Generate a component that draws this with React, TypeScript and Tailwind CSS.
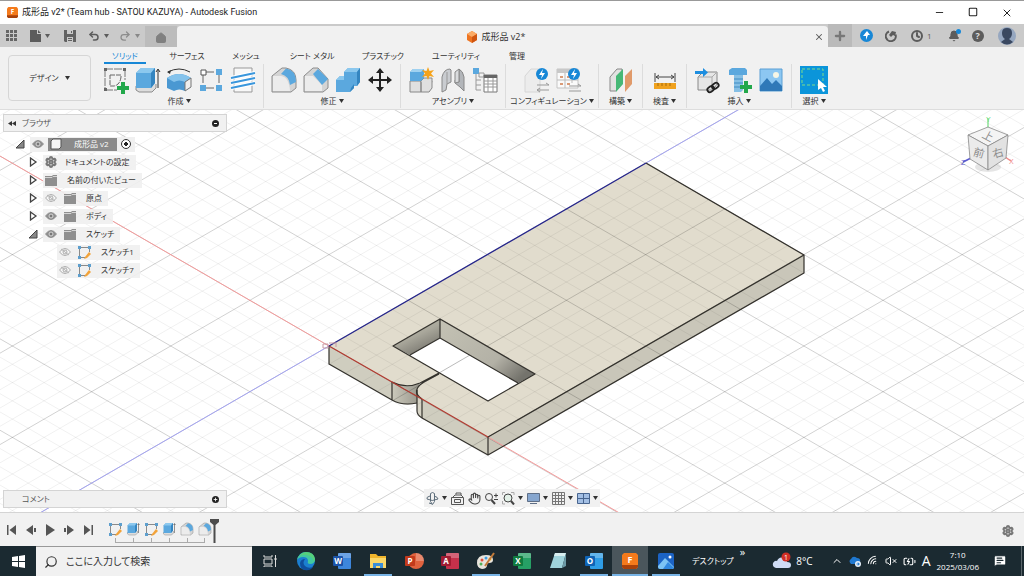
import type { ReactNode } from 'react';
import { Search, Minus, Square, X, Plus, Undo2, Redo2, House, Bell, Clock, Settings, Hand, MessageSquareText, ChevronUp, Wifi, VolumeX, BatteryCharging } from 'lucide-react';

// ---------- canvas geometry ----------
const ORIGIN = { x: 329, y: 346 };
const SLOPE = 0.5774;
const MINOR = 18.28;

const gridLines = (dir: number) =>
    Array.from({ length: 81 }, (_, i) => i - 40).map((k) => {
        const y = (x: number) => ORIGIN.y + dir * SLOPE * (x - ORIGIN.x) + k * MINOR;
        return { k, major: k % 5 === 0, y1: y(-200), y2: y(1400) };
    });

function Grid() {
    return (
        <g>
            {[1, -1].map((dir) =>
                gridLines(dir).map((l) => (
                    <line
                        key={`${dir}${l.k}`}
                        x1={-200}
                        y1={l.y1}
                        x2={1400}
                        y2={l.y2}
                        stroke="#000"
                        strokeOpacity={l.major ? 0.18 : 0.06}
                    />
                ))
            )}
        </g>
    );
}

function Model() {
    return (
        <svg className="absolute inset-0 h-full w-full" viewBox="0 110 1024 402" preserveAspectRatio="xMidYMid slice">
            <defs>
                <linearGradient id="wallL" x1="0" y1="0.2" x2="0.5" y2="1">
                    <stop offset="0" stopColor="#bcb9aa" />
                    <stop offset="0.5" stopColor="#aaa89c" />
                    <stop offset="1" stopColor="#7d7b73" />
                </linearGradient>
                <linearGradient id="wallR" x1="0" y1="0" x2="1" y2="0.7">
                    <stop offset="0" stopColor="#c4c2b4" />
                    <stop offset="0.7" stopColor="#b3b1a6" />
                    <stop offset="1" stopColor="#74736c" />
                </linearGradient>
                <linearGradient id="fillet" x1="0" y1="0" x2="1" y2="0">
                    <stop offset="0" stopColor="#cbc9bb" />
                    <stop offset="1" stopColor="#98968c" />
                </linearGradient>
            </defs>
            <rect x="-200" y="0" width="1600" height="700" fill="#fff" />
            <path d="M329 346 646 163 804 255 488 437 422 399Q411 392 420 384L439 373 420 383Q407 389 392 382Z" fill="#e1dccd" />
            <path d="M329 346 392 382V400L329 364Z" fill="#cfcdbf" />
            <path d="M392 382Q405 389 420 383L418 388V403Q404 407 392 400Z" fill="url(#fillet)" />
            <path d="M417 390Q417 396 422 399V418Q417 415 417 411Z" fill="#d6d3c5" />
            <path d="M422 399 488 437V455L422 418Z" fill="#cfcdbf" />
            <path d="M488 437 804 255V273L488 455Z" fill="#c9c6b9" />
            <Grid />
            <path d="M393 346 440 319 535 374 488 401Z" fill="#fff" />
            <path d="M439 373 470 355" stroke="#bbb" />
            <path d="M393 346 440 319V338L410 355Z" fill="url(#wallL)" />
            <path d="M440 319 535 374 518 383 440 338Z" fill="url(#wallR)" />
            <path d="M-200 40.6 329 346M488 437 1000 733" stroke="#f59a9a" />
            <path d="M329 346-200 651.5M646 163 1000-41" stroke="#a3a3f3" />
            <g fill="none" stroke="#33312c" strokeWidth="1.2" strokeLinejoin="round">
                <path d="M646 163 804 255V273L488 455 422 418Q417 415 417 411V390" />
                <path d="M804 255 488 437V455M329 346V364L392 400Q402 406 417 403M392 382V400M422 399V418" />
                <path d="M392 382Q406 389 420 383L439 373M422 399Q410 391 424 382L439 374" />
                <path d="M393 346 440 319 535 374 488 401ZM440 319V338L518 383M440 338 410 355" />
            </g>
            <path d="M329 346 392 382Q399 386 404 389L422 399 488 437" fill="none" stroke="#b23a30" strokeWidth="1.2" />
            <path d="M329 346 646 163" stroke="#25258c" strokeWidth="1.3" />
            <path d="M323 344h5v4h-5zM329 343h7v4" fill="none" stroke="#c79aa5" />
        </svg>
    );
}

function ViewCube() {
    return (
        <svg className="absolute top-1 right-1 h-16 w-16" viewBox="956 114 64 64">
            <ellipse cx="988" cy="167" rx="13" ry="5" fill="#000" opacity=".1" />
            <path d="M988 128V118" stroke="#6fdc7c" strokeWidth="1.2" />
            <path d="M971 158 963 162" stroke="#5a5ad0" strokeWidth="1.5" />
            <path d="M1005 157 1011 161" stroke="#f08a8a" strokeWidth="1.5" />
            <g stroke="#888" strokeWidth=".8" strokeLinejoin="round">
                <path d="M988 127 1008 135 988 146 968 135Z" fill="#f4f4f4" />
                <path d="M968 135 988 146V170L970 159Z" fill="#ebebeb" />
                <path d="M1008 135 988 146V170L1006 158Z" fill="#e2e2e2" />
            </g>
            <g fontSize="11" fill="#8c8c8c" textAnchor="middle" fontFamily="Noto Sans CJK JP">
                <text x="988" y="140" transform="rotate(28 988 136)">上</text>
                <text x="979" y="157" transform="rotate(16 979 153)">前</text>
                <text x="998" y="157" transform="rotate(-16 998 153)">右</text>
            </g>
            <g fontSize="7" fontFamily="Liberation Sans">
                <text x="986" y="122" fill="#6fdc7c">Y</text>
                <text x="961" y="165" fill="#5a5ad0">Z</text>
                <text x="1009" y="164" fill="#f08a8a">X</text>
            </g>
        </svg>
    );
}

// ---------- ribbon icons, all on a 28px grid ----------
const Ico = ({ children, className = 'size-7' }: { children: ReactNode; className?: string }) => (
    <svg className={className} viewBox="0 0 28 28" fill="none">{children}</svg>
);

const BLUE = '#5ba8de';
const GRAY = '#8c8c8c';

const BoltBadge = ({ x }: { x: number }) => (
    <g>
        <circle cx={x} cy="8" r="6" fill="#1787d6" />
        <path d={`M${x + 1} 3l-4 6h3l-1 4 4-6h-3z`} fill="#fff" />
    </g>
);

const icons: Record<string, ReactNode> = {
    sketch: (
        <Ico>
            <path d="M4 3h20M4 3v21M24 3v11M4 24h12" stroke="#777" strokeDasharray="8 1" />
            <path d="M9 9h11v2q-1 8-7 9H9z" stroke="#666" strokeDasharray="5 1" />
            <path d="M3 2h3v3H3zM22 2h3v3h-3zM3 22h3v3H3z" fill="#666" />
            <path d="M20 16h4v4h4v4h-4v4h-4v-4h-4v-4h4z" fill="#22a84b" />
        </Ico>
    ),
    extrude: (
        <Ico>
            <path d="M3 20v4l3 2h13l4-4v-4" fill="#ddd" stroke={GRAY} />
            <path d="M3 7 8 2h14v15l-4 5H3z" fill={BLUE} />
            <path d="M3 7 8 2h14l-4 5z" fill="#8cc8ee" />
            <path d="M18 7 22 2v15l-4 5z" fill="#3485c0" />
            <path d="M25 22V4M23 6l2-3 2 3" stroke="#333" />
        </Ico>
    ),
    revolve: (
        <Ico>
            <path d="M3 6Q14 0 25 6" stroke="#333" />
            <path d="M2 6l4-2-1 4z" fill="#333" />
            <path d="M2 12Q14 4 26 12v9l-6 4q-6-3-11 0l-7-3z" fill="#4a98d2" />
            <path d="M2 12Q14 4 26 12l-6 4q-6-3-11 0z" fill="#85c3ec" />
            <path d="M20 16l6-4v9l-6 4z" fill="#eee" stroke="#777" />
        </Ico>
    ),
    pattern: (
        <Ico>
            <path d="M9 6h11M6 9v11M9 22h11M22 9v10" stroke="#666" strokeDasharray="8 2" />
            <path d="M4 4h5v5H4z" fill="#fff" stroke="#555" />
            <path d="M19 3h6v6h-6zM3 19h6v6H3zM19 19h6v6h-6z" fill={BLUE} />
        </Ico>
    ),
    thread: (
        <Ico>
            <path d="M5 2h18v24H5z" fill="#f8f8f8" stroke="#999" />
            <path d="M2 12 26 7M2 17l24-5M2 22l24-5" stroke="#fff" strokeWidth="4" />
            <path d="M2 12 26 7M2 17l24-5M2 22l24-5" stroke="#3996dc" strokeWidth="2" />
        </Ico>
    ),
    fillet: (
        <Ico>
            <path d="M2 10 12 2h4q10 2 10 12v8l-5 4H2z" fill="#d4d4d4" stroke="#8c8c8c" />
            <path d="M3 10h8q8 1 9 15H3z" fill="#ececec" />
            <path d="M11 8 16 2.500Q26 4 26 16l-6 3Q19 10 11 8z" fill={BLUE} />
        </Ico>
    ),
    chamfer: (
        <Ico>
            <path d="M2 10 11 2h5l10 11v9l-5 4H2z" fill="#d4d4d4" stroke="#8c8c8c" />
            <path d="M3 10h8l9 9v6H3z" fill="#ececec" />
            <path d="M11 8 16 3l10 10-6 6z" fill={BLUE} />
        </Ico>
    ),
    combine: (
        <Ico>
            <path d="M10 6l4-4h12v14l-3 4h-3v2l-4 4H2V14l4-4h4z" fill={BLUE} />
            <path d="M10 6l4-4h12l-3 4zM2 14l4-4h4v4z" fill="#8cc8ee" />
            <path d="M23 6l3-4v14l-3 4zM17 22l3-4v4l-4 4z" fill="#3485c0" />
        </Ico>
    ),
    move: (
        <Ico>
            <path d="M14 5v18M5 14h18" stroke="#222" strokeWidth="2" />
            <path d="M14 2l4 5h-8zM14 26l4-5h-8zM2 14l5-4v8zM26 14l-5-4v8z" fill="#222" />
        </Ico>
    ),
    component: (
        <Ico>
            <path d="M3 15h11v11H3zM14 15h11l-3 11h-8z" fill="#e0e0e0" stroke="#888" />
            <path d="M14 15l3-3h8v10l-3 4" fill="#e0e0e0" stroke="#888" />
            <path d="M3 6l3-3h11v9l-3 3H3z" fill={BLUE} />
            <path d="M3 6l3-3h11l-3 3z" fill="#9fd1f0" />
            <path d="M21 1l1.500 4L27 4l-3 3.500L27 11l-4.500-1L21 14l-1.500-4L15 11l3-3.500L15 4l4.500 1z" fill="#f5a31b" />
        </Ico>
    ),
    joint: (
        <Ico>
            <path d="M3 11q2-8 8-8l1 1v12l-4 2-1 6-4 2z" fill="#c9ccd0" stroke="#888" />
            <path d="M25 11q-1-6-5-8v13l-4-2v3l5 4 4 4z" fill="#b3b6ba" stroke="#888" />
            <path d="M16 6l4-3v13l-4 1z" fill="#dadcde" stroke="#888" />
            <path d="M8 6v12" stroke="#999" />
        </Ico>
    ),
    table: (
        <Ico>
            <path d="M2 2h6v6H2z" fill={BLUE} />
            <path d="M8 7h5v4H8zM5 8v16M5 14h5M5 19h5M5 24h5" stroke="#999" />
            <path d="M13 9h13v17H13z" fill="#fff" stroke="#777" />
            <path d="M13 9h13v3H13z" fill="#666" />
            <path d="M13 15h13M13 18h13M13 21h13M17 12v14M22 12v14" stroke="#999" />
        </Ico>
    ),
    config: (
        <Ico>
            <path d="M3 10l6-7h9v23H3z" fill="#ececec" stroke="#d6d6d6" />
            <path d="M15 19h12l-3-2M15 24h12M18 22l-3 2 3 2" stroke="#999" />
            <BoltBadge x={20} />
        </Ico>
    ),
    configTable: (
        <Ico>
            <path d="M3 3h21v19H3z" fill="#fafafa" stroke="#c4c4c4" />
            <path d="M3 3h21v4H3z" fill="#c8c8c8" />
            <path d="M6 11h3M6 18h3M13 11h3M13 18h3" stroke="#d99a77" strokeWidth="2" />
            <path d="M11 7v15M3 14h21M18 7v10" stroke="#bbb" />
            <path d="M15 20h12l-3-2M15 25h12" stroke="#999" />
            <BoltBadge x={20} />
        </Ico>
    ),
    plane: (
        <Ico>
            <path d="M3 11l7-8h5v15l-6 7H3z" fill="#e2e2e2" stroke="#888" />
            <path d="M9 10l7-7v15l-7 8z" fill="#46b876" />
            <path d="M18 10l7-7v15l-7 8z" fill="#e09a6a" />
        </Ico>
    ),
    measure: (
        <Ico>
            <path d="M4 7v9M24 7v9M5 11h18M8 9l-3 2 3 2M20 9l3 2-3 2" stroke="#444" />
            <path d="M3 17h22v6H3z" fill="#f0a21e" />
            <path d="M7 17v3M11 17v3M15 17v3M19 17v3" stroke="#a56a08" />
        </Ico>
    ),
    insert: (
        <Ico>
            <path d="M5 11l5-5h14v12l-4 6H5z" fill="#e6e6e6" stroke="#888" />
            <path d="M5 11h14l5-5M19 11v12" stroke="#aaa" />
            <path d="M2 5h8V2l5 4.500-5 4.500V8H2z" fill="#1d8ee0" />
            <g stroke="#222" strokeWidth="1.800">
                <rect x="14" y="21" width="7" height="5" rx="2.500" transform="rotate(-35 17 23)" />
                <rect x="19" y="17" width="7" height="5" rx="2.500" transform="rotate(-35 23 20)" />
            </g>
        </Ico>
    ),
    bolt: (
        <Ico>
            <path d="M4 4l3-2h13l2 2v5H4z" fill={BLUE} />
            <path d="M9 9h9v15l-2 2h-7z" fill="#86bfe4" />
            <path d="M9 13h9M9 17h9M9 21h9" stroke="#3f8cc4" />
            <path d="M19 15h4v4h4v4h-4v4h-4v-4h-4v-4h4z" fill="#22a84b" />
        </Ico>
    ),
    image: (
        <Ico>
            <path d="M3 3h22v22H3z" fill="#8cc7f2" stroke="#5a9fd4" />
            <path d="M3 20l7-8 5 6 4-4 6 6v5H3z" fill="#2f79b8" />
            <circle cx="19" cy="9" r="3" fill="#f6f6e6" />
        </Ico>
    ),
    select: (
        <Ico>
            <path d="M0 0h28v28H0z" fill="#0b95da" />
            <path d="M2 3h21v16H2z" stroke="#7fdc8a" strokeDasharray="3 2" />
            <path d="M18 13v11l3-2 2 4 2-1-2-4h4z" fill="#fff" />
        </Ico>
    ),
};

const groups = [
    { label: '作成', items: ['sketch', 'extrude', 'revolve', 'pattern', 'thread'], box: 'px-1.5' },
    { label: '修正', items: ['fillet', 'chamfer', 'combine', 'move'], box: 'px-1.5' },
    { label: 'アセンブリ', items: ['component', 'joint', 'table'], box: 'px-1.5' },
    { label: 'コンフィギュレーション', items: ['config', 'configTable'], box: 'w-[93px]' },
    { label: '構築', items: ['plane'], box: 'w-11' },
    { label: '検査', items: ['measure'], box: 'w-11' },
    { label: '挿入', items: ['insert', 'bolt', 'image'], box: 'px-1.5' },
    { label: '選択', items: ['select'], box: 'w-11' },
];

const tabs = [
    { label: 'ソリッド', w: 'w-[60px]' },
    { label: 'サーフェス', w: 'w-16' },
    { label: 'メッシュ', w: 'w-[54px]' },
    { label: 'シート メタル', w: 'w-[78px]' },
    { label: 'プラスチック', w: 'w-16' },
    { label: 'ユーティリティ', w: 'w-[82px]' },
    { label: '管理', w: 'w-10' },
];

const Caret = ({ className = 'text-[#333]' }: { className?: string }) => (
    <svg className={`h-1 w-[5px] shrink-0 ${className}`} viewBox="0 0 5 4"><path d="M0 0h5L2.500 4z" fill="currentColor" /></svg>
);

const FusionLogo = ({ className }: { className: string }) => (
    <svg className={className} viewBox="0 0 16 16">
        <path d="M2 0h12l2 2v12l-2 2H2l-2-2V2z" fill="#f47a1c" />
        <path d="M0 12h16v2l-2 2H2l-2-2z" fill="#a8410b" />
        <text x="8" y="10" fontSize="9" fontWeight="700" fill="#fff" textAnchor="middle" fontFamily="Open Sans">F</text>
    </svg>
);

function TitleBar() {
    return (
        <header className="flex h-6 items-center border-t border-[#999] bg-white pl-[7px]">
            <FusionLogo className="mr-1 size-[11px]" />
            <h1 className="font-['Roboto','Noto_Sans_CJK_JP',sans-serif] text-[9px] text-[#222]">成形品 v2* (Team hub - SATOU KAZUYA) - Autodesk Fusion</h1>
            <div className="ml-auto flex text-[#222]">
                <button aria-label="最小化" className="flex w-[34px] justify-center"><Minus size={11} strokeWidth={2} /></button>
                <button aria-label="最大化" className="flex w-[34px] justify-center"><Square size={10} strokeWidth={2.500} /></button>
                <button aria-label="閉じる" className="flex w-[34px] justify-center"><X size={12} strokeWidth={2} /></button>
            </div>
        </header>
    );
}

function DocumentBar() {
    return (
        <div className="flex h-[23px] items-stretch bg-[#cacaca] text-[#5c5c5c]">
            <div className="flex w-[145px] items-center pl-1.5">
                <button aria-label="データ パネル">
                    <svg className="size-3" viewBox="0 0 12 12" fill="#666">
                        {[1, 5, 9].map((y) => [0, 4, 8].map((x) => <rect key={`${x}${y}`} x={x} y={y - 1} width="3" height="3" />))}
                    </svg>
                </button>
                <button aria-label="ファイル" className="ml-3 flex items-center gap-1">
                    <svg className="h-3 w-[11px]" viewBox="0 0 11 12"><path d="M0 0h7v4h4v8H0zM8 0l3 3H8z" fill="#5c5c5c" /></svg>
                    <Caret className="text-[#5c5c5c]" />
                </button>
                <button aria-label="保存" className="ml-3.5">
                    <svg className="size-3" viewBox="0 0 12 12">
                        <path d="M0 0h12v12H1l-1-1z" fill="#626262" />
                        <path d="M3 0h6v4H3zM3 7h6v5H3z" fill="#cacaca" />
                        <path d="M7 1h1v2H7zM4 9h4M4 8h4v1H4zM4 10h4v1H4z" fill="#626262" />
                    </svg>
                </button>
                <button aria-label="元に戻す" className="ml-3 flex items-center gap-1"><Undo2 size={12} strokeWidth={3} /><Caret className="text-[#5c5c5c]" /></button>
                <button aria-label="やり直し" className="ml-2.5 flex items-center gap-1 text-[#8c8c8c]"><Redo2 size={12} strokeWidth={2.500} /><Caret className="text-[#888]" /></button>
            </div>
            <button aria-label="ホーム" className="mt-0.5 flex w-8 items-center justify-center bg-[#bcbcbc] pt-0.5"><House size={12} fill="#808080" color="#808080" /></button>
            <div className="mt-0.5 flex flex-1 items-center rounded-t-sm bg-[#f1f1f1]">
                <span className="flex flex-1 items-center justify-center gap-1 pl-1 text-[9px] text-[#333]">
                    <svg className="size-3" viewBox="0 0 12 12">
                        <path d="M6 0l5 3v6l-5 3-5-3V3z" fill="#ee7421" />
                        <path d="M6 0l5 3-5 3-5-3z" fill="#fbab65" />
                        <path d="M6 6l5-3v6l-5 3z" fill="#cf5510" />
                    </svg>
                    成形品 v2*
                </span>
                <button aria-label="タブを閉じる" className="flex w-[18px] justify-center"><X size={10} strokeWidth={2.500} /></button>
            </div>
            <div className="flex w-[196px] items-center">
                <button aria-label="新規" className="flex h-full w-6 items-center justify-center bg-[#bababa]"><Plus size={14} strokeWidth={4} color="#777" /></button>
                <button aria-label="更新" className="ml-2 flex size-[13px] items-center justify-center rounded-full bg-[#1787d6]">
                    <svg className="size-[9px]" viewBox="0 0 9 9"><path d="M5 0L8 4H6L4 9V5H1z" fill="#fff" /></svg>
                </button>
                <button aria-label="同期" className="ml-3">
                    <svg className="size-3" viewBox="0 0 12 12" fill="none">
                        <path d="M4 1.500a5 5 0 1 0 6.500 3" stroke="#5c5c5c" strokeWidth="2" />
                        <path d="M4 5l3-4 4 1-1 4-2-1-2 2z" fill="#5c5c5c" />
                    </svg>
                </button>
                <button aria-label="ジョブ" className="ml-3.5 flex items-center gap-1 text-[8px]"><Clock size={12} strokeWidth={4} />1</button>
                <button aria-label="通知" className="relative ml-4">
                    <Bell size={12} fill="#5c5c5c" />
                    <span className="absolute -top-px -right-px size-[5px] rounded-full bg-[#1787d6]" />
                </button>
                <button aria-label="ヘルプ" className="ml-3 flex size-3 items-center justify-center rounded-full bg-[#5c5c5c] text-[9px] font-bold text-[#ddd]">?</button>
                <button aria-label="アカウント" className="ml-3.5">
                    <svg className="size-[18px]" viewBox="0 0 18 18">
                        <circle cx="9" cy="9" r="9" fill="#96a7c0" />
                        <path d="M9 1q5 0 5 5 0 4-3 6l4 3q-6 5-12 0l4-3Q4 10 4 6q0-5 5-5z" fill="#3a4860" />
                    </svg>
                </button>
            </div>
        </div>
    );
}

function Ribbon() {
    return (
        <div className="flex h-[63px] border-b border-[#ddd] bg-[#f1f1f1] text-[#333]">
            <div className="w-[95px] px-2 pt-2">
                <button className="flex h-[46px] w-[83px] items-center justify-center gap-1.5 rounded border border-[#d6d6d6] text-[8px]">
                    デザイン <Caret />
                </button>
            </div>
            <div className="flex flex-col">
                <nav className="flex h-[17px] text-[8px]">
                    {tabs.map((t, i) => (
                        <button key={t.label} className={`flex justify-center ${t.w}`}>
                            <span className={`h-[17px] px-2 leading-[18px] whitespace-nowrap ${i === 0 ? 'border-b-2 border-[#1787d6] text-[#1787d6]' : ''}`}>{t.label}</span>
                        </button>
                    ))}
                </nav>
                <div className="flex h-11">
                    {groups.map((g, i) => (
                        <div key={g.label} className={`flex flex-col items-center ${g.box} ${i < groups.length - 1 ? 'border-r border-[#dcdcdc]' : ''}`}>
                            <div className="flex h-[31px] items-center gap-1">
                                {g.items.map((name) => (
                                    <button key={name} aria-label={name}>{icons[name]}</button>
                                ))}
                            </div>
                            <button className="flex h-3 items-center gap-0.5 text-[8px] leading-3 whitespace-nowrap">{g.label}<Caret /></button>
                        </div>
                    ))}
                </div>
            </div>
        </div>
    );
}

// ---------- browser tree ----------
const Folder = () => (
    <svg className="h-[11px] w-3" viewBox="0 0 12 11"><path d="M0 1h7l1-1h4v11H0z" fill="#8f8f8f" /><path d="M0 2.500h7l1-1h4" stroke="#d5d5d5" fill="none" /></svg>
);
const SketchIcon = () => (
    <svg className="size-[13px]" viewBox="0 0 13 13" fill="none">
        <path d="M2 1.500h9M1.500 2v9M2 11.500h5M11.500 2v4" stroke="#8a8a8a" />
        <path d="M0 0h3v3H0zM10 0h3v3h-3zM0 10h3v3H0z" fill="#5d9fce" />
        <path d="M7 11l4-5 2 2-4 4-3 1z" fill="#f2a33a" />
    </svg>
);

const rows = [
    { label: 'ドキュメントの設定', kind: 'gear' },
    { label: '名前の付いたビュー', kind: 'folder' },
    { label: '原点', kind: 'folder', eye: 'off' },
    { label: 'ボディ', kind: 'folder', eye: 'on' },
    { label: 'スケッチ', kind: 'folder', eye: 'on', open: true },
    { label: 'スケッチ1', kind: 'sketch', eye: 'off' },
    { label: 'スケッチ7', kind: 'sketch', eye: 'off' },
];

const Twisty = ({ open }: { open?: boolean }) => (
    <button aria-label={open ? '折りたたむ' : '展開'} className="flex w-3 justify-center">
        <svg className="size-[10px]" viewBox="0 0 10 10">
            {open ? <path d="M1 9L9 1v8z" fill="#888" stroke="#444" /> : <path d="M2.500 1L8 5 2.500 9z" fill="#fff" stroke="#444" strokeWidth="1.300" />}
        </svg>
    </button>
);

const EyeButton = ({ on }: { on: boolean }) => (
    <button aria-label="表示切替">
        <svg className="h-2 w-3" viewBox="0 0 12 8" fill="none">
            <path d="M.5 4Q6-3 11.500 4 6 11 .5 4z" fill={on ? '#8d8d8d' : '#f8f8f8'} stroke={on ? '#8d8d8d' : '#aaa'} />
            <circle cx="6" cy="4" r="2" fill={on ? '#777' : 'none'} stroke={on ? '#d8d8d8' : '#aaa'} />
            {!on && <path d="M2 1l8 6" stroke="#b5b5b5" />}
        </svg>
    </button>
);

function Browser() {
    return (
        <aside className="relative w-56 text-[8px] text-[#333]">
            <div className="flex h-[18px] items-center border border-[#d4d4d4] bg-[#f1f1f1] px-1">
                <svg className="h-[5px] w-2" viewBox="0 0 8 5"><path d="M4 0v5L0 2.500zM8 0v5L4 2.500z" fill="#333" /></svg>
                <span className="ml-1.5 text-[#555]">ブラウザ</span>
                <button aria-label="最小化" className="ml-auto mr-[3px] flex size-[7px] items-center rounded-full bg-[#222] px-0.5"><span className="h-px w-full bg-white" /></button>
            </div>
            <ul>
                <li className="mt-[3px] flex h-[18px] items-center pl-[11px]">
                    <Twisty open />
                    <div className="ml-1 flex h-[15px] items-center bg-[#f0f0f0] pr-1 pl-0.5">
                        <EyeButton on />
                        <span className="mx-1 flex h-[13px] items-center bg-[#8a8a8a] pr-2 pl-0.5 text-white">
                            <svg className="mr-3 size-3" viewBox="0 0 12 12"><path d="M1 3l2-2h8v8l-2 2H1z" fill="#f5f5f5" stroke="#555" /></svg>
                            成形品 v2
                        </span>
                        <input type="radio" name="active" aria-label="アクティブにする" defaultChecked className="size-[10px] appearance-none rounded-full border border-[#333] bg-[radial-gradient(#222_30%,white_35%)]" />
                    </div>
                </li>
                {rows.map((r) => (
                    <li key={r.label} className={`flex h-[18px] items-center ${r.kind === 'sketch' ? 'pl-[54px]' : 'pl-6'}`}>
                        {r.kind !== 'sketch' && <Twisty open={r.open} />}
                        <div className={`flex h-[15px] items-center bg-[#f0f0f0]/90 pr-1.5 pl-0.5 ${r.kind === 'sketch' ? '' : 'ml-1'}`}>
                            {r.eye && <span className="mr-[7px] flex"><EyeButton on={r.eye === 'on'} /></span>}
                            {r.kind === 'gear' && <Settings size={12} strokeWidth={4} color="#777" />}
                            {r.kind === 'folder' && <Folder />}
                            {r.kind === 'sketch' && <SketchIcon />}
                            <span className={r.kind === 'gear' ? 'ml-2' : 'ml-2.5'}>{r.label}</span>
                        </div>
                    </li>
                ))}
            </ul>
        </aside>
    );
}

function NavBar() {
    const btn = 'flex items-center gap-[3px]';
    return (
        <div className="absolute bottom-[5px] left-1/2 flex h-[18px] -translate-x-1/2 items-center gap-1 bg-[#f1f1f1] px-0.5 text-[#444]">
            <button aria-label="オービット" className={btn}>
                <svg className="size-[13px]" viewBox="0 0 13 13" fill="none" stroke="#5d6d7a">
                    <path d="M4 4Q0 5 1 7q5 3 11 0 0-2-4-3" />
                    <path d="M4.500 1.500L6.500.5l2 1v8l-2 3-2-3zM3 11l3 1" />
                </svg>
                <Caret />
            </button>
            <button aria-label="ビュー正面" className={btn}>
                <svg className="size-[13px]" viewBox="0 0 13 13" fill="none" stroke="#555"><path d="M.5 5.500h12v7H.5zM2 5l2-2h6l2 2M5 2.500V1h5v2M3.500 7.500h6v3h-6z" /></svg>
            </button>
            <button aria-label="画面移動" className={btn}><Hand size={13} /></button>
            <button aria-label="ズーム" className={btn}>
                <svg className="size-[13px]" viewBox="0 0 13 13" fill="none" stroke="#444"><circle cx="4" cy="5" r="3.500" /><path d="M6.500 8l3.500 4" strokeWidth="2" /><path d="M9 3.500h4M11 1.500v4M9 7.500h4" /></svg>
            </button>
            <button aria-label="フィット" className={btn}>
                <svg className="size-[13px]" viewBox="0 0 13 13" fill="none" stroke="#444"><path d="M.5 3V.5H3M9 .5h3V3M.5 9v3H3" stroke="#aaa" /><circle cx="6" cy="6" r="4" fill="#e3f0e8" /><path d="M9 9l3 3.500" strokeWidth="2" /></svg>
                <Caret />
            </button>
            <button aria-label="表示設定" className={btn}>
                <svg className="size-[13px]" viewBox="0 0 13 13"><path d="M.5 1.500h12v8H.5zM3 11.500h7" fill="#86a6cf" stroke="#5f6f87" /></svg>
                <Caret />
            </button>
            <button aria-label="グリッド" className={btn}>
                <svg className="size-[13px]" viewBox="0 0 13 13" fill="none" stroke="#777"><path d="M.5.5h12v12H.5zM3.500 0v13M6.500 0v13M9.500 0v13M0 3.500h13M0 6.500h13M0 9.500h13" /></svg>
                <Caret />
            </button>
            <button aria-label="ビューポート" className={btn}>
                <svg className="size-[13px]" viewBox="0 0 13 13"><path d="M.5 1.500h12v10H.5zM6.500 1v11M0 6.500h13" fill="#a3bfe4" stroke="#48658f" /></svg>
                <Caret />
            </button>
        </div>
    );
}

// ---------- timeline ----------
const features = ['sketch', 'extrude', 'sketch', 'extrude', 'fillet', 'fillet'];

const players = [
    { label: '先頭へ', d: 'M1 1h1.500v10H1zM10 1v10L3.500 6z' },
    { label: '戻る', d: 'M8 1v10L1 6zM9 4h2v4H9z' },
    { label: '再生', d: 'M2 0l9 6-9 6z' },
    { label: '進む', d: 'M4 1v10l7-5zM1 4h2v4H1z' },
    { label: '末尾へ', d: 'M9.500 1H11v10H9.500zM2 1v10l6.500-5z' },
];

function Timeline() {
    return (
        <footer className="flex h-[34px] items-start border-t border-[#d4d4d4] bg-[#f1f1f1] px-1.5 pt-1.5">
            <div className="flex gap-[7px] pt-[5px]">
                {players.map((p) => (
                    <button key={p.label} aria-label={p.label}>
                        <svg className="size-3" viewBox="0 0 12 12"><path d={p.d} fill="#555" /></svg>
                    </button>
                ))}
            </div>
            <div className="ml-3 flex">
                {features.map((f, i) => (
                    <div key={i} className="flex w-[18px] flex-col items-center pt-[3px]">
                        <button aria-label={f} className="flex h-[14px] items-center">
                            {f === 'sketch' ? <SketchIcon /> : <span className="block size-[14px] [&>svg]:size-[14px]">{icons[f]}</span>}
                        </button>
                        <span className={`mt-0.5 h-[5px] border-b border-[#aaa] ${i === 0 ? 'w-[9px] self-end border-l' : i === 5 ? 'w-[9px] self-start border-r' : 'w-full'}`}>
                            {i > 0 && i < 5 && <span className="mx-auto block h-1 w-px bg-[#aaa]" />}
                        </span>
                    </div>
                ))}
            </div>
            <svg className="-ml-1 h-6 w-[9px]" viewBox="0 0 9 24"><path d="M0 0h9v3L5.500 6v18h-2V6L0 3z" fill="#4c4c4c" /></svg>
            <button aria-label="設定" className="mt-1.5 ml-auto mr-1"><Settings size={12} strokeWidth={4} color="#777" /></button>
        </footer>
    );
}

// ---------- windows taskbar ----------
const OfficeIcon = ({ letter, color, tag, round }: { letter: string; color: string; tag: string; round?: boolean }) => (
    <svg className="size-5" viewBox="0 0 20 20">
        {round ? <circle cx="12" cy="10" r="8" fill={color} /> : <rect x="6" y="2" width="13" height="16" rx="1" fill={color} />}
        <path d={round ? 'M12 2a8 8 0 0 1 8 8h-8z' : 'M6 3q0-1 1-1h11q1 0 1 1v4H6z'} fill="#fff" opacity=".25" />
        <rect x="1" y="5" width="10" height="10" rx="1" fill={tag} />
        <text x="6" y="13" fontSize="8" fontWeight="700" fill="#fff" textAnchor="middle" fontFamily="Open Sans">{letter}</text>
    </svg>
);

const apps: { name: string; icon: ReactNode; open?: boolean; active?: boolean }[] = [
    { name: 'タスク ビュー', icon: <svg className="size-[14px]" viewBox="0 0 14 14" fill="none" stroke="#ddd"><path d="M1 1v2h8V1M1 5h8v5H1zM1 13v-1h8v1M12.500 1v12M11 5h3" /></svg> },
    {
        name: 'Edge',
        icon: (
            <svg className="size-5" viewBox="0 0 20 20">
                <circle cx="10" cy="10" r="9" fill="#1b7fd0" />
                <path d="M1 9q2-8 9-8 8 0 9 7 0 5-5 5-3 0-2-3 0-4-5-4-4 0-6 3z" fill="#42c8a0" />
                <path d="M3 6q3-5 8-5 7 1 8 7 0 2-1 3-1-6-8-7-4-1-7 2z" fill="#5fd36a" opacity=".7" />
                <path d="M9 8q-3 4 0 7 3 3 8 1-3 4-8 3-5-1-5-7 1-4 5-4z" fill="#0f4f9e" />
            </svg>
        ),
    },
    { name: 'Word', icon: <OfficeIcon letter="W" color="#3d86dc" tag="#1b52a8" /> },
    { name: 'エクスプローラー', open: true, icon: <svg className="size-5" viewBox="0 0 20 20"><path d="M2 3h6l2 2h8v12H2z" fill="#f0b52c" /><path d="M2 7h16v10H2z" fill="#fbd768" /><path d="M5 17v-5h10v5h-3v-2H8v2z" fill="#3b8ed8" /></svg> },
    { name: 'PowerPoint', icon: <OfficeIcon letter="P" color="#e0623e" tag="#c23a1c" round /> },
    { name: 'Access', icon: <OfficeIcon letter="A" color="#c4314b" tag="#a01c32" /> },
    {
        name: 'ペイント',
        open: true,
        icon: (
            <svg className="size-5" viewBox="0 0 20 20">
                <path d="M1 12q0-8 9-8 7 0 7 5 0 3-4 3-2 0-2 3-1 3-5 3-5-1-5-6z" fill="#e8e4dc" />
                <circle cx="6" cy="9" r="1.500" fill="#e2503c" /><circle cx="10" cy="7" r="1.500" fill="#3f9be0" /><circle cx="5" cy="13" r="1.500" fill="#53b158" /><circle cx="14" cy="8" r="1.500" fill="#f0b52c" />
                <path d="M18 2l-9 13" stroke="#c27b3a" strokeWidth="2" />
            </svg>
        ),
    },
    { name: 'Excel', icon: <OfficeIcon letter="X" color="#26a065" tag="#107a3e" /> },
    { name: 'メモ帳', icon: <svg className="size-5" viewBox="0 0 20 20"><path d="M7 2h11l-4 15H2z" fill="#9fd3dc" /><path d="M7 2h11l-1 3H6z" fill="#d8eef0" /><path d="M14 17l4-15v13z" fill="#6c9aa6" /></svg> },
    { name: 'Outlook', open: true, icon: <OfficeIcon letter="O" color="#2e9de6" tag="#0f63b5" /> },
    { name: 'Fusion', open: true, active: true, icon: <FusionLogo className="size-4" /> },
    { name: 'フォト', open: true, icon: <svg className="size-[18px]" viewBox="0 0 18 18"><rect x="1" y="1" width="16" height="16" rx="2" fill="#1c63c4" /><path d="M1 14l7-8 9 9q0 2-2 2H3q-2 0-2-2z" fill="#7cc4f4" /><path d="M6 17l5-7 6 6-2 1z" fill="#3189e0" /><circle cx="13" cy="5" r="1.500" fill="#fff" /></svg> },
];

function Taskbar() {
    return (
        <div className="flex h-[30px] items-stretch bg-[#1b2a31] text-white">
            <button aria-label="スタート" className="flex w-9 items-center justify-center">
                <svg className="size-[13px]" viewBox="0 0 13 13" fill="#fff"><path d="M0 2l6-1v5H0zM7 1l6-1v6H7zM0 7h6v5l-6-1zM7 7h6v6l-6-1z" /></svg>
            </button>
            <label className="flex w-[216px] items-center gap-2 border-t border-[#999] bg-[#f1f1f1] px-2 text-[#333]">
                <Search size={14} className="shrink-0 -scale-x-100" />
                <input type="text" aria-label="検索" placeholder="ここに入力して検索" className="w-full text-[10px] outline-none placeholder:text-[#333]" />
            </label>
            {apps.map((a) => (
                <button key={a.name} aria-label={a.name} className={`flex w-9 flex-col items-center ${a.active ? 'bg-[#4a565c]' : ''}`}>
                    <span className="flex flex-1 items-center pt-0.5">{a.icon}</span>
                    <span className={`h-0.5 ${a.active ? 'w-full' : 'w-7'} ${a.open ? 'bg-[#78b4e6]' : ''}`} />
                </button>
            ))}
            <div className="ml-2 flex items-center gap-1.5 text-[8px]">
                デスクトップ <span className="self-start text-[11px] leading-3">»</span>
            </div>
            <div className="ml-auto flex items-center">
                <button className="mr-[18px] flex items-center gap-1 text-[10px]">
                    <svg className="h-[18px] w-5" viewBox="0 0 20 18">
                        <path d="M4 16q-4-1-3-5 2-3 4-2 2-5 7-3 3 1 3 4 4 0 4 3t-3 3z" fill="#cfdcf5" />
                        <circle cx="14" cy="5" r="4.500" fill="#d12f25" />
                        <text x="14" y="8" fontSize="7" fill="#fff" textAnchor="middle">1</text>
                    </svg>
                    8°C
                </button>
                <div className="flex items-center gap-1.5">
                    <ChevronUp size={12} />
                    <svg className="size-3" viewBox="0 0 12 12">
                        <path d="M2 9q-3-3 0-5 2-4 6-1 4 0 3 4l-1 2z" fill="#1f78d0" />
                        <circle cx="9" cy="9" r="3" fill="#e6f0fa" />
                        <path d="M7.500 9h3M9 7.500l1 1.500-1 1.500" stroke="#1f78d0" fill="none" />
                    </svg>
                    <Wifi size={12} className="-rotate-45" />
                    <VolumeX size={12} />
                    <BatteryCharging size={13} />
                    <span className="text-sm">A</span>
                </div>
                <div className="ml-1.5 text-center text-[8px] leading-3">
                    <div>7:10</div>
                    <div>2025/03/06</div>
                </div>
                <button aria-label="通知" className="mx-3.5"><MessageSquareText size={14} fill="#fff" stroke="#1b2a31" /></button>
                <span className="mr-0.5 h-full w-px bg-[#5b666b]" />
            </div>
        </div>
    );
}

export default function App() {
    return (
        <div className="flex min-h-screen flex-col overflow-hidden bg-white font-['Open_Sans','Noto_Sans_CJK_JP',sans-serif] [font-feature-settings:'palt']">
            <TitleBar />
            <DocumentBar />
            <Ribbon />
            <main className="relative flex min-h-80 flex-1 flex-col justify-between px-[3px] py-1">
                <Model />
                <Browser />
                <ViewCube />
                <div className="relative flex h-[18px] w-56 items-center border border-[#d4d4d4] bg-[#f1f1f1] pr-[7px] pl-[18px] text-[8px] text-[#555]">
                    コメント
                    <button aria-label="コメントを追加" className="ml-auto flex size-[7px] items-center justify-center rounded-full bg-[#222] text-white"><Plus size={5} strokeWidth={4} /></button>
                </div>
                <NavBar />
            </main>
            <Timeline />
            <Taskbar />
        </div>
    );
}
